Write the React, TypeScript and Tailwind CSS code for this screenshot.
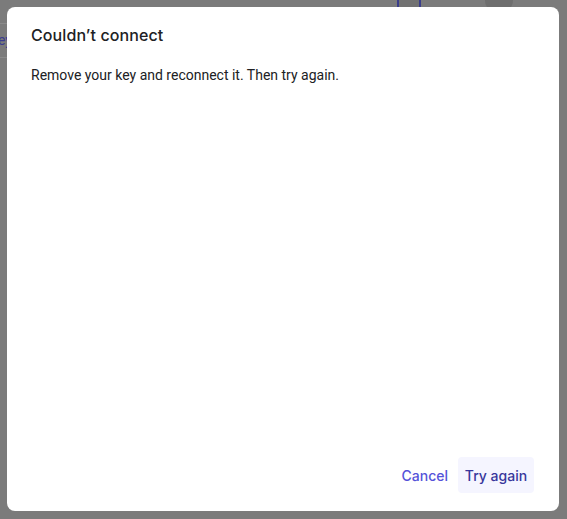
import React from 'react'

export default function App() {
  return (
    <div className="relative w-[567px] h-[519px] overflow-hidden bg-[#7b7b7b]" style={{ fontFamily: 'Roboto, sans-serif' }}>
      {/* page behind the scrim */}
      <div className="flex h-full">
        <div className="w-[20px] flex flex-col">
          <div className="h-[23px]" />
          <div className="h-[35px] border-y border-[#8a8a8a] flex items-center text-[14px] text-[#3b3b8f] -ml-[9px]">key</div>
        </div>
        <div className="flex-1 relative">
          <div className="absolute left-[377px] top-0 w-[24px] h-[8px] border-x-2 border-[#3a3d8a] bg-[#727272]" />
          <div className="absolute left-[465px] -top-[14px] w-[28px] h-[28px] rounded-full bg-[#6e6e6e]" />
        </div>
      </div>

      {/* dialog */}
      <div className="absolute left-[7px] top-[7px] w-[552px] h-[504px] bg-white rounded-[8px] flex flex-col pl-6 pr-[25px] pt-[18px] pb-[18px]">
        <h1 className="text-[16px] font-medium text-[#202124] leading-[20px] tracking-[0.1px]" style={{ fontFamily: 'Inter, "Open Sans", sans-serif' }}>
          Couldn’t connect
        </h1>
        <p className="mt-[20px] text-[14px] leading-[20px] text-[#202124]">
          Remove your key and reconnect it. Then try again.
        </p>
        <div className="flex-1" />
        <div className="flex justify-end items-center gap-[10px]" style={{ fontFamily: 'Inter, "Open Sans", sans-serif' }}>
          <button className="h-[36px] text-[14px] font-medium text-[#5553d9]">Cancel</button>
          <button className="h-[36px] w-[76px] rounded-[4px] bg-[#f5f5ff] text-[14px] font-medium text-[#38379c]">Try again</button>
        </div>
      </div>
    </div>
  )
}
